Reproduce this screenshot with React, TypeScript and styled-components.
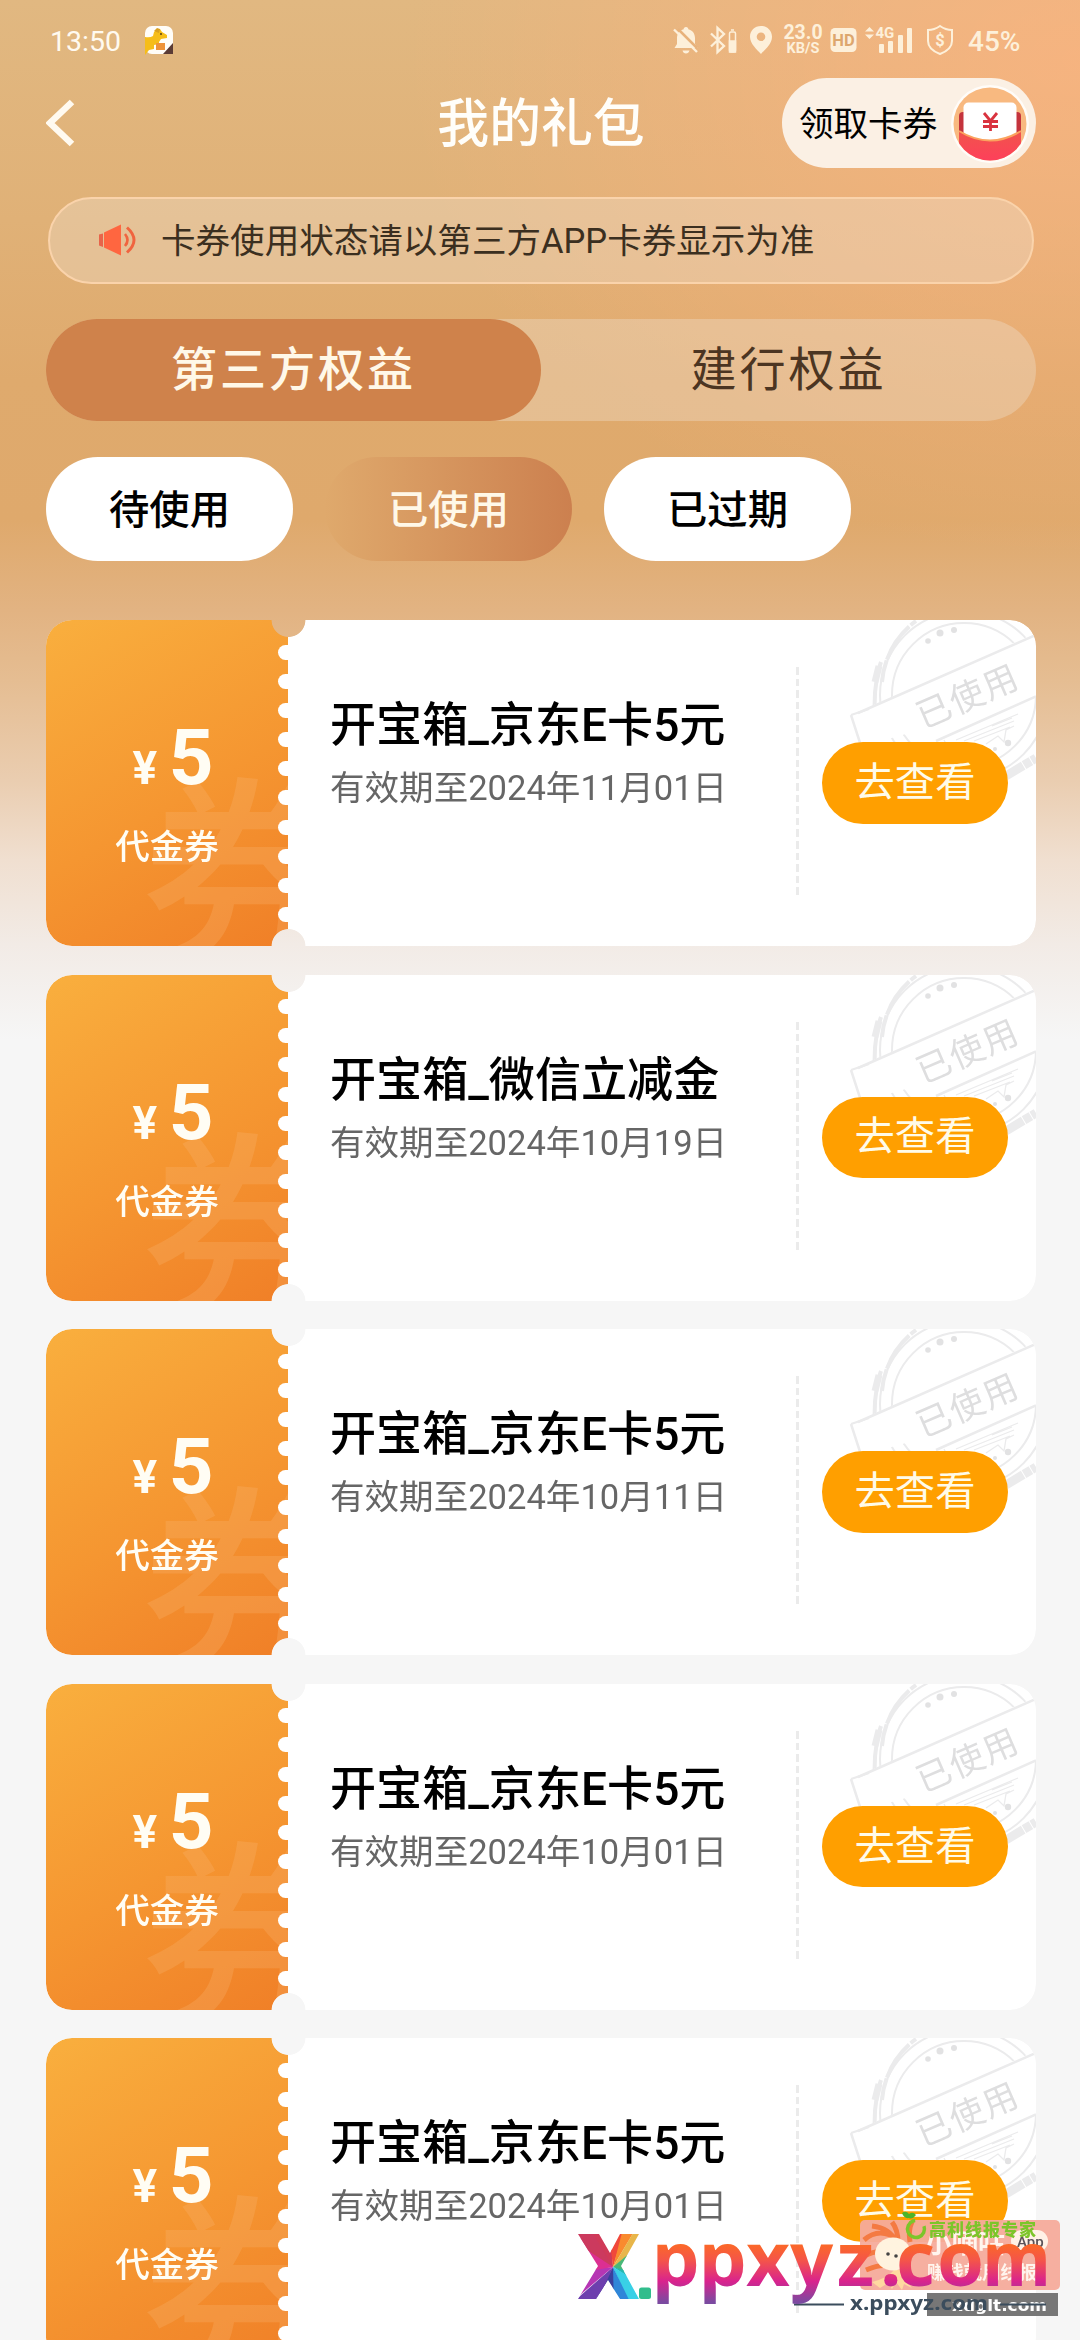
import React from "react";
import styled, { createGlobalStyle, css } from "styled-components";

const Global = createGlobalStyle`
  * { box-sizing: border-box; }
  html, body { margin: 0; padding: 0; background: #f6f6f6; }
  body {
    width: 1080px; height: 2340px; overflow: hidden;
    font-family: Roboto, "Noto Sans CJK SC", sans-serif;
  }
`;

const Screen = styled.main`
  position: relative;
  width: 1080px;
  height: 2340px;
  overflow: hidden;
  display: flex;
  flex-direction: column;
  > * { flex-shrink: 0; }
  background:
    radial-gradient(ellipse 680px 500px at 1080px 60px, rgba(255, 178, 128, 0.7), rgba(255, 178, 128, 0) 100%),
    linear-gradient(180deg, #e1b881 0, #e0b177 220px, #dfaa6d 380px, #dfa96c 520px, #e2b382 610px, #e5bd92 680px, #eacdb0 780px, #f0dfd0 860px, #f2ebe6 945px, #f6f6f6 1040px, #f6f6f6 100%);
`;

const StatusBar = styled.div`
  display: flex;
  align-items: center;
  height: 78px;
  padding: 2px 59px 0 50px;
  color: #fffaf0;
`;

const Clock = styled.span`
  font-size: 28.5px;
  width: 94px;
  padding-top: 2px;
`;

const StatusRight = styled.div`
  display: flex;
  align-items: center;
  margin-left: auto;
  color: #fdf0da;
`;

const Slot = styled.span<{ $w: number; $ml?: number }>`
  display: flex;
  width: ${(p) => p.$w}px;
  margin-left: ${(p) => p.$ml ?? 0}px;
`;

const Speed = styled.span`
  display: flex;
  flex-direction: column;
  align-items: center;
  width: 42px;
  margin-left: 9px;
  font-weight: 700;
  font-size: 19.5px;
  line-height: 16px;
  small { font-size: 14.5px; line-height: 15px; font-weight: 700; }
`;

const Battery = styled.span`
  width: 53px;
  margin-left: 14px;
  padding-top: 3px;
  font-size: 28px;
  font-weight: 500;
  white-space: nowrap;
`;

const Header = styled.header`
  display: grid;
  grid-template-columns: 254px 1fr 254px;
  align-items: center;
  height: 90px;
  padding: 0 44px 0 46px;
`;

const Title = styled.h1`
  margin: 0;
  padding-top: 3px;
  text-align: center;
  color: #fffefa;
  font-size: 51.84px;
  line-height: 60px;
  font-weight: 500;
`;

const ClaimPill = styled.button`
  display: flex;
  align-items: center;
  justify-content: space-between;
  width: 254px;
  height: 90px;
  padding: 1px 7px 0 17px;
  border: 0;
  border-radius: 45px;
  background: #fbf0e4;
  color: #000;
  font: 400 34.56px/40px Roboto, "Noto Sans CJK SC", sans-serif;
`;

const Notice = styled.div`
  display: flex;
  align-items: center;
  gap: 23px;
  height: 87px;
  margin: 29px 46px 0 48px;
  padding: 0 0 5px 48px;
  border: 2px solid #fad3ab;
  border-radius: 44px;
  background: rgba(238, 221, 200, 0.4);
  color: #3b2f20;
  font-size: 34.56px;
  svg { margin-top: 4px; }
`;

const Tabs = styled.nav`
  display: flex;
  height: 102px;
  margin: 35px 44px 0 46px;
  border-radius: 51px;
  background: rgba(238, 221, 200, 0.4);
`;

const Tab = styled.button<{ $active?: boolean }>`
  flex: 1;
  border: 0;
  padding: 0;
  border-radius: 51px;
  background: ${(p) => (p.$active ? "#cf824b" : "transparent")};
  color: ${(p) => (p.$active ? "#fff8e8" : "#4c3522")};
  font: ${(p) => (p.$active ? 500 : 400)} 46.08px/60px Roboto, "Noto Sans CJK SC", sans-serif;
  letter-spacing: 2.88px;
`;

const Filters = styled.div`
  display: flex;
  gap: 32px;
  margin: 36px 0 0 46px;
`;

const Filter = styled.button<{ $active?: boolean }>`
  width: 247px;
  height: 104px;
  padding: 3px 0 0;
  border: 0;
  border-radius: 52px;
  font: 500 40.32px/50px Roboto, "Noto Sans CJK SC", sans-serif;
  ${(p) =>
    p.$active
      ? css`background: linear-gradient(90deg, #dfa96c, #cc804f); color: #fff8e8;`
      : css`background: #fff; color: #000;`}
`;

const List = styled.section`
  display: flex;
  flex-direction: column;
  gap: 28.6px;
  margin: 59px 44px 0 46px;
`;

const Card = styled.article`
  position: relative;
  flex: none;
  display: flex;
  height: 326px;
  border-radius: 26px;
  overflow: hidden;
  background: #fff;
  mask: radial-gradient(circle 17px at 242.5px 0, transparent 16.5px, #000 17.3px),
    radial-gradient(circle 17px at 242.5px 326px, transparent 16.5px, #000 17.3px);
  mask-composite: intersect;
`;

const Stub = styled.div`
  position: relative;
  display: flex;
  flex-direction: column;
  align-items: center;
  width: 242px;
  padding-top: 92px;
  overflow: hidden;
  color: #fffdf4;
  background: linear-gradient(150deg, #f9af3e 0%, #f59631 55%, #f07f27 100%);
`;

const Amount = styled.div`
  position: relative;
  display: flex;
  align-items: baseline;
  gap: 11.5px;
  height: 92px;
  padding-left: 12px;
  line-height: 92px;
  font-size: 78px;
  font-weight: 700;
  small { font-size: 46px; }
`;

const Kind = styled.div`
  position: relative;
  margin-top: 18px;
  font-size: 34.56px;
  line-height: 50px;
  font-weight: 500;
`;

const Ghost = styled.span`
  position: absolute;
  left: 95px;
  top: 160px;
  font-size: 204px;
  line-height: 204px;
  font-weight: 500;
  color: rgba(250, 180, 110, 0.3);
`;

const Scallops = styled.div`
  position: absolute;
  left: 232px;
  top: 24.5px;
  display: flex;
  flex-direction: column;
  gap: 14.2px;
  i { width: 20px; height: 15px; border-radius: 7.5px; background: #fff; }
`;

const Info = styled.div`
  flex: 1;
  padding: 75px 0 0 42px;
`;

const Name = styled.h2`
  margin: 0;
  color: #000;
  font-size: 46.08px;
  line-height: 60px;
  font-weight: 500;
  white-space: nowrap;
`;

const Expiry = styled.p`
  margin: 9px 0 0;
  color: #666;
  font-size: 34.56px;
  line-height: 48px;
  white-space: nowrap;
`;

const Action = styled.div`
  position: relative;
  width: 240px;
  padding: 122px 0 0 26px;
`;

const Perforation = styled.div`
  position: absolute;
  left: 0;
  top: 47px;
  width: 3px;
  height: 229px;
  background: repeating-linear-gradient(180deg, #ebebeb 0 7.5px, transparent 7.5px 11.6px);
`;

const ViewButton = styled.button`
  position: relative;
  width: 186px;
  height: 81.5px;
  padding: 0;
  border: 0;
  border-radius: 41px;
  background: #ff9f00;
  color: #fffbe9;
  font: 400 40.32px/50px Roboto, "Noto Sans CJK SC", sans-serif;
`;

const StampSvg = styled.svg`
  position: absolute;
  right: 0;
  top: 0;
`;

const Overlay = styled.svg`
  position: absolute;
  left: 560px;
  top: 2200px;
`;

const ICON_CREAM = "#fdf0da";

const AppIcon = () => (
  <svg width="30" height="30" viewBox="0 0 30 30">
    <rect x="1" y="1" width="28" height="28" rx="7" fill="#fffdf8" />
    <path d="M1 12q5 1 8-1l1-4 3-3 3 0 2 3 5 3 0 3-6 1-2 3 0 2-5 1 0 4-5 1-4 5z" fill="#f6bd18" />
    <path d="M10 6l3-3 3 1-1 4z" fill="#d9a01e" />
    <circle cx="17" cy="9" r="1" fill="#5a4010" />
    <path d="M12 18h9v7h-9z" fill="#ee9338" />
    <path d="M29 18v11H19z" fill="#5a3b35" />
  </svg>
);

const BellOff = () => (
  <svg width="26" height="30" viewBox="0 0 26 30" fill={ICON_CREAM}>
    <path d="M13 2c1.600 0 2.300 1 2.300 2.200C19.500 5.200 22 8.500 22 13v6l2.500 4H1.500L4 19v-6c0-4.500 2.500-7.800 6.700-8.800C10.700 3 11.400 2 13 2zM9.500 25.500h7c-.5 2-1.700 3-3.500 3s-3-1-3.500-3z" />
    <path d="M5 4l19 19" stroke="#e8b27a" strokeWidth="2.500" />
    <path d="M1 4.500l23 22.500" stroke={ICON_CREAM} strokeWidth="2.400" />
  </svg>
);

const Bluetooth = () => (
  <svg width="28" height="30" viewBox="0 0 28 30" fill="none" stroke={ICON_CREAM} strokeWidth="2.300">
    <path d="M2 8.500l13 12.500-6.500 6V3l6.500 6L2 21.500" />
    <rect x="20.500" y="7" width="6" height="20" rx="1.500" strokeWidth="1.500" />
    <path d="M20.500 16h6v11h-6zM22 5h3" fill={ICON_CREAM} strokeWidth="1.500" />
  </svg>
);

const Pin = () => (
  <svg width="24" height="30" viewBox="0 0 24 30" fill={ICON_CREAM}>
    <path fillRule="evenodd" d="M12 1C5.700 1 1 5.700 1 11.800 1 19 8 24.500 12 29c4-4.500 11-10 11-17.200C23 5.700 18.300 1 12 1zm0 6.500a4.300 4.300 0 110 8.600 4.300 4.300 0 010-8.600z" />
  </svg>
);

const HdBadge = () => (
  <svg width="27" height="26" viewBox="0 0 27 26">
    <rect x="0.500" y="1" width="26" height="24" rx="4.500" fill={ICON_CREAM} />
    <text x="13.500" y="19" textAnchor="middle" fontFamily="Roboto" fontWeight="700" fontSize="16.500" fill="#dda76e">HD</text>
  </svg>
);

const Signal = () => (
  <svg width="49" height="30" viewBox="0 0 49 30" fill={ICON_CREAM}>
    <path d="M0 6.500L4.500 2 9 6.500zM0 9.500h9L4.500 14z" />
    <text x="10.500" y="13" fontFamily="Roboto" fontWeight="700" fontSize="15">4G</text>
    <rect x="14" y="19" width="5" height="9" rx="1" />
    <rect x="23" y="16" width="5" height="12" rx="1" />
    <rect x="33" y="10" width="5" height="18" rx="1" />
    <rect x="42" y="3" width="5" height="25" rx="1" />
  </svg>
);

const Shield = () => (
  <svg width="28" height="32" viewBox="0 0 28 32" fill="none" stroke={ICON_CREAM} strokeWidth="2">
    <path d="M14 2c3.500 2.500 7.500 4 12 4v11c0 6.500-5.500 10.500-12 13C7.500 27.500 2 23.500 2 17V6c4.500 0 8.500-1.500 12-4z" />
    <text x="14" y="22" textAnchor="middle" fontFamily="Roboto" fontWeight="700" fontSize="16.500" fill={ICON_CREAM} stroke="none">$</text>
  </svg>
);

const BackArrow = () => (
  <svg width="32" height="50" viewBox="0 0 32 50" fill="none" stroke="#fffaf0" strokeWidth="6.500">
    <path d="M26 4L4 25l22 21" />
  </svg>
);

const RedPacket = () => (
  <svg width="78" height="78" viewBox="0 0 78 78">
    <defs>
      <clipPath id="rp"><circle cx="39" cy="39" r="36.500" /></clipPath>
      <linearGradient id="rpg" x1="0" y1="0" x2="0" y2="1">
        <stop offset="0" stopColor="#f0544c" /><stop offset="1" stopColor="#ff3e5c" />
      </linearGradient>
    </defs>
    <circle cx="39" cy="39" r="39" fill="#fffcf8" />
    <g clipPath="url(#rp)">
      <rect width="78" height="78" fill="#f8b980" />
      <rect x="8" y="27" width="62" height="26" rx="4" fill="#c4333c" />
      <rect x="12.500" y="17.500" width="53" height="46" rx="5" fill="#fff" />
      <path d="M8 46q31 19 62 0v32H8z" fill="url(#rpg)" />
      <path d="M8 46q31 19 62 0" fill="none" stroke="#fba35e" strokeWidth="2" />
    </g>
    <path d="M33 28l6.500 8 6.500-8M39.500 36v10M32 36.500h15M32 41.500h15" fill="none" stroke="#d9333f" strokeWidth="2.800" />
  </svg>
);

const Speaker = () => (
  <svg width="40" height="34" viewBox="0 0 40 34">
    <path d="M1 11.500l4-1V24l-4-1.500z" fill="#e8644a" />
    <path d="M6 9.500L23 1.500v31L6 24.500z" fill="#ff6640" />
    <path d="M27 11q5 6 0 12" fill="none" stroke="#f0643f" strokeWidth="2.600" />
    <path d="M29 4.500q14 12.500 0 25" fill="none" stroke="#f0643f" strokeWidth="3" />
  </svg>
);

const Stamp = () => (
  <StampSvg width="190" height="170" viewBox="0 0 190 170" fill="none" stroke="#ebebec">
    <circle cx="118" cy="75" r="84" strokeWidth="2" />
    <path d="M36 62A84 84 0 0 1 70 1" strokeWidth="4" strokeDasharray="22 1 40 2" />
    <path d="M29 96Q27 66 35 42" strokeWidth="4" strokeDasharray="10 1 26 1" />
    <path d="M29 62l4-16" strokeWidth="7" />
    <circle cx="118" cy="75" r="72" strokeWidth="2" />
    <path d="M5 95L190 13v64L14 127z" fill="#fff" stroke="none" />
    <path d="M12 93L190 15M5 95l11 34M90 121L190 76.500" strokeWidth="2.500" />
    <path d="M5 95l18-6" strokeWidth="2" />
    <path d="M98 120l4 8M110 120l62-26M118 121l50-20M128 121l36-14M140 124l12-8 6 6 2-12 8-4M146 106l20-8" strokeWidth="1.300" />
    <path d="M160 156L190 138" strokeWidth="9" strokeDasharray="20 1 8 1" />
    <g fill="#e2e2e3" stroke="none">
      <circle cx="82" cy="21" r="2.800" /><circle cx="94" cy="13" r="3.500" /><circle cx="108" cy="10" r="3" />
      <circle cx="162" cy="123" r="3.200" /><circle cx="149" cy="129" r="2" />
    </g>
    <text x="77" y="109" transform="rotate(-23.500 77 109)" fontFamily="Noto Sans CJK SC" fontSize="34.500" letterSpacing="1.500" fill="#dededf" stroke="none">已使用</text>
  </StampSvg>
);

const Watermarks = () => (
  <Overlay width="520" height="140" viewBox="560 2200 520 140">
    <defs>
      <linearGradient id="brand" gradientUnits="userSpaceOnUse" x1="0" y1="2243" x2="0" y2="2302">
        <stop offset="0" stopColor="#fc6a25" /><stop offset="0.300" stopColor="#f4544a" />
        <stop offset="0.650" stopColor="#d9238e" /><stop offset="1" stopColor="#7b4aa0" />
      </linearGradient>
      <clipPath id="xshape">
        <path d="M578 2234h21l11 19 10-19h19l-18 32 18 33h-19l-12-19-12 19h-18l20-33z" />
      </clipPath>
    </defs>
    <rect x="860" y="2220" width="200" height="70" rx="5" fill="#f5ab9b" fillOpacity="0.950" />
    <g fill="none" stroke="#f47a42" strokeWidth="5">
      <path d="M864 2240q16-14 34 0M872 2226q18 2 24 16M864 2256q16-8 26-2M892 2222q6 8 6 20M912 2222q-4 8-2 20M866 2270q14-6 22-4" />
    </g>
    <path d="M872 2282q16-4 22-12l8 0q2 10 10 18l-8-4-2 6-6-8-4 7-4-6-8 5z" fill="#ffd9a0" />
    <ellipse cx="893" cy="2254" rx="18" ry="16.500" fill="#fff3df" />
    <circle cx="888" cy="2254" r="1.800" fill="#444" /><circle cx="896" cy="2256" r="1.800" fill="#444" />
    <rect x="1011" y="2230" width="37" height="22" rx="11" fill="#fff1e6" />
    <g fontFamily="Noto Sans CJK SC" fontWeight="700" fill="#fff5ee">
      <text x="925" y="2253" fontSize="27" textLength="80">小嘀咕</text>
      <text x="927" y="2279" fontSize="18.500" textLength="110">赚钱就用线报</text>
    </g>
    <text x="1017" y="2247" fontFamily="Roboto" fontWeight="500" fontSize="15" fill="#5a5258">App</text>
    <rect x="927" y="2293" width="131" height="23" fill="#777" />
    <text x="952" y="2311" fontFamily="DejaVu Sans" fontWeight="700" fontSize="16" textLength="95" lengthAdjust="spacingAndGlyphs" fill="#fff">xdglt.com</text>
    <text x="850" y="2310" fontFamily="Noto Sans" fontWeight="700" fontSize="20" textLength="138" lengthAdjust="spacingAndGlyphs" fill="#3b4d5d">x.ppxyz.com</text>
    <path d="M794 2304.500h50M1000 2304.500h46" stroke="#3b4d5d" strokeWidth="2" />
    <g clipPath="url(#xshape)">
      <path d="M613 2267L570 2225h40z" fill="#d03a58" />
      <path d="M613 2267L608 2225h18z" fill="#f0483a" />
      <path d="M613 2267L624 2225h14z" fill="#f98a2e" />
      <path d="M613 2267L636 2228l14 12z" fill="#e8b64a" />
      <path d="M613 2267L650 2236v46z" fill="#48b878" />
      <path d="M613 2267L652 2278v14z" fill="#25b8b0" />
      <path d="M613 2267L652 2290v20h-20z" fill="#39d0e6" />
      <path d="M613 2267L634 2310h-22z" fill="#2f86d8" />
      <path d="M613 2267L614 2310h-24z" fill="#3a3f9c" />
      <path d="M613 2267L594 2310h-30z" fill="#6d3fae" />
      <path d="M613 2267L560 2312v-40z" fill="#b636b4" />
      <path d="M613 2267L560 2276v-56z" fill="#dc2f92" />
      <path d="M613 2267L560 2232l24-14z" fill="#cc3a5e" />
    </g>
    <rect x="639" y="2287.500" width="12" height="11.500" rx="2.500" fill="#31bd8c" />
    <text x="651.500 698.500 746 790 837 880 896 937" y="2285.500" fontFamily="Open Sans" fontWeight="700" fontSize="76" fill="url(#brand)">ppxyz.co</text>
    <text x="982" y="2285.500" fontFamily="Open Sans" fontWeight="700" fontSize="76" textLength="69" lengthAdjust="spacingAndGlyphs" fill="url(#brand)">m</text>
    <circle cx="916" cy="2229" r="8.500" fill="none" stroke="#7cc52a" strokeWidth="3.500" strokeDasharray="42 12" transform="rotate(-20 916 2229)" />
    <path d="M902 2213q4-3 7 1 4-3 7 1-4 5-7 3-5 1-7-5z" fill="#4db52a" />
    <text x="929" y="2236" fontFamily="Noto Sans CJK SC" fontWeight="900" fontSize="17" textLength="107" fill="#7cc52a">高利线报专家</text>
  </Overlay>
);

const coupons = [
  { name: "开宝箱_京东E卡5元", date: "2024年11月01日" },
  { name: "开宝箱_微信立减金", date: "2024年10月19日" },
  { name: "开宝箱_京东E卡5元", date: "2024年10月11日" },
  { name: "开宝箱_京东E卡5元", date: "2024年10月01日" },
  { name: "开宝箱_京东E卡5元", date: "2024年10月01日" },
];

const Coupon = ({ name, date }: { name: string; date: string }) => (
  <Card>
    <Stub>
      <Ghost>券</Ghost>
      <Amount><small>¥</small>5</Amount>
      <Kind>代金券</Kind>
    </Stub>
    <Scallops>{Array.from({ length: 10 }, (_, i) => <i key={i} />)}</Scallops>
    <Info>
      <Name>{name}</Name>
      <Expiry>有效期至{date}</Expiry>
    </Info>
    <Action>
      <Perforation />
      <Stamp />
      <ViewButton>去查看</ViewButton>
    </Action>
  </Card>
);

export default function App() {
  return (
    <Screen>
      <Global />
      <StatusBar>
        <Clock>13:50</Clock>
        <AppIcon />
        <StatusRight>
          <Slot $w={26}><BellOff /></Slot>
          <Slot $w={28} $ml={10}><Bluetooth /></Slot>
          <Slot $w={24} $ml={12}><Pin /></Slot>
          <Speed>23.0<small>KB/S</small></Speed>
          <Slot $w={27} $ml={6}><HdBadge /></Slot>
          <Slot $w={49} $ml={8}><Signal /></Slot>
          <Slot $w={28} $ml={12}><Shield /></Slot>
          <Battery>45%</Battery>
        </StatusRight>
      </StatusBar>
      <Header>
        <BackArrow />
        <Title>我的礼包</Title>
        <ClaimPill>领取卡券<RedPacket /></ClaimPill>
      </Header>
      <Notice><Speaker />卡券使用状态请以第三方APP卡券显示为准</Notice>
      <Tabs>
        <Tab $active>第三方权益</Tab>
        <Tab>建行权益</Tab>
      </Tabs>
      <Filters>
        <Filter>待使用</Filter>
        <Filter $active>已使用</Filter>
        <Filter>已过期</Filter>
      </Filters>
      <List>
        {coupons.map((c, i) => <Coupon key={i} {...c} />)}
      </List>
      <Watermarks />
    </Screen>
  );
}
